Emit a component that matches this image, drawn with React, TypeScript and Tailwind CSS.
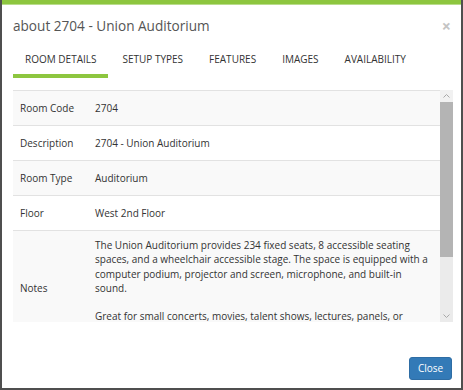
const tabs = ['Room Details', 'Setup Types', 'Features', 'Images', 'Availability'];

const rows = [
  { label: 'Room Code', value: '2704' },
  { label: 'Description', value: '2704 - Union Auditorium' },
  { label: 'Room Type', value: 'Auditorium' },
  { label: 'Floor', value: 'West 2nd Floor' },
];

function Chevron({ up }: { up?: boolean }) {
  return (
    <svg width="7" height="4" viewBox="0 0 7 4" className={up ? '' : 'rotate-180'}>
      <path d="M0.5 3.5 L3.5 0.5 L6.5 3.5" fill="none" stroke="#a8a8a8" strokeWidth="1" />
    </svg>
  );
}

export default function App() {
  return (
    <div className="w-[463px] h-[390px] bg-white border-x-2 border-b-2 border-[#4f4f4f] flex flex-col font-['Open_Sans',sans-serif]">
      <div className="h-[5px] shrink-0 bg-[#8dc63f] border-b border-[#b9dc8c]" />

      {/* Header */}
      <div className="pt-[11px] pl-[11px] pr-[10px] flex items-center justify-between">
        <h1 className="text-[13.6px] leading-[20px] text-[#555555]">about 2704 - Union Auditorium</h1>
        <span className="text-[16px] leading-[16px] font-bold text-[#c4c4c4]">×</span>
      </div>

      {/* Tabs */}
      <div className="mt-[15px] pl-[11px] flex gap-[2px]">
        {tabs.map((tab, i) => (
          <div key={tab} className="flex flex-col">
            <div className="px-3 pb-[7px] text-[10px] leading-[16px] uppercase text-[#333333]">{tab}</div>
            <div className={i === 0 ? 'h-[4px] bg-[#8dc63f]' : 'h-[4px]'} />
          </div>
        ))}
      </div>

      {/* Details table with scrollbar */}
      <div className="mt-[12px] ml-[11px] mr-[8px] h-[232px] shrink-0 flex">
        <div className="flex-1 overflow-hidden text-[10px] text-[#333333] border-t border-[#e2e2e2]">
          {rows.map((row, i) => (
            <div
              key={row.label}
              className={`h-[35px] flex items-center border-b border-[#e2e2e2] ${i % 2 === 0 ? 'bg-[#f9f9f9]' : 'bg-white'}`}
            >
              <div className="w-[75px] px-[7px]">{row.label}</div>
              <div className="flex-1 px-[7px]">{row.value}</div>
            </div>
          ))}
          <div className="flex items-center bg-[#f9f9f9] border-b border-[#e2e2e2]">
            <div className="w-[75px] px-[7px]">Notes</div>
            <div className="flex-1 px-[7px] pt-[7px] pb-[8px] leading-[14.3px]">
              The Union Auditorium provides 234 fixed seats, 8 accessible seating spaces, and a wheelchair
              accessible stage. The space is equipped with a computer podium, projector and screen,
              microphone, and built-in sound.
              <br />
              <br />
              Great for small concerts, movies, talent shows, lectures, panels, or conferences.
            </div>
          </div>
        </div>
        <div className="w-[13px] flex flex-col bg-[#ebebeb]">
          <div className="h-[12px] flex items-center justify-center bg-[#f1f1f1]">
            <Chevron up />
          </div>
          <div className="h-[155px] bg-[#b4b4b4]" />
          <div className="flex-1" />
          <div className="h-[12px] flex items-center justify-center">
            <Chevron />
          </div>
        </div>
      </div>

      {/* Footer */}
      <div className="flex-1 flex items-end justify-end pr-[9px] pb-[8px]">
        <button className="w-[43px] h-[23px] rounded-[3px] bg-[#337ab7] border border-[#2e6da4] text-[10px] text-white">
          Close
        </button>
      </div>
    </div>
  );
}
